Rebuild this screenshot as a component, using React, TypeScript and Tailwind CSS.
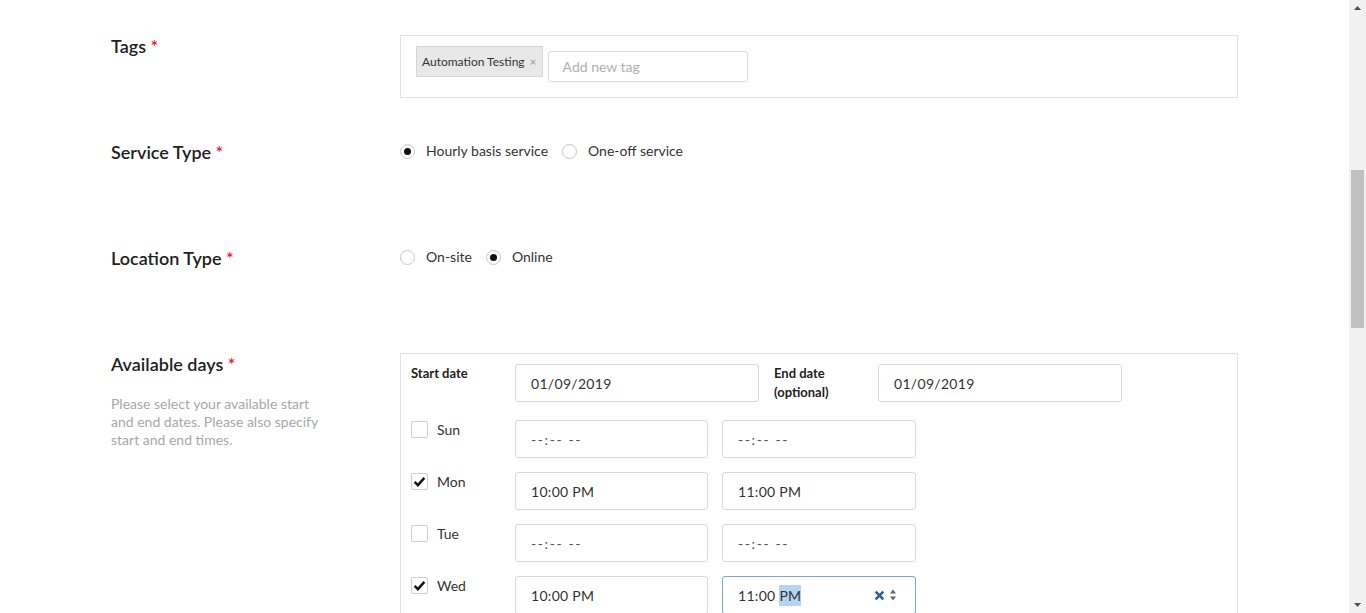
import React from "react";

const font = { fontFamily: "Lato, 'Open Sans', sans-serif" };

function Label({ text }: { text: string }) {
  return (
    <div className="w-[289px] shrink-0 text-[18px] leading-[22px] font-semibold text-[#222]">
      {text} <span className="text-[#e8202a]">*</span>
    </div>
  );
}

function Radio({ checked, label }: { checked?: boolean; label: string }) {
  return (
    <div className="flex items-center">
      <span className="w-[15px] h-[15px] rounded-full border border-[#c8c8c8] flex items-center justify-center bg-white">
        {checked && <span className="w-[7px] h-[7px] rounded-full bg-[#111]" />}
      </span>
      <span className="ml-[11px] text-[14px] leading-[15px] text-[#333] -translate-y-[1px]">{label}</span>
    </div>
  );
}

function Check({ checked, label }: { checked?: boolean; label: string }) {
  return (
    <div className="w-[104px] shrink-0 flex items-start pt-[1px]">
      <span className="w-[17px] h-[17px] rounded-[2px] border border-[#cfcfcf] flex items-center justify-center bg-white">
        {checked && (
          <svg width="13" height="13" viewBox="0 0 16 16">
            <path d="M2 8.5 L6 12.5 L14 3.5" fill="none" stroke="#111" strokeWidth="3" />
          </svg>
        )}
      </span>
      <span className="ml-[9px] text-[14px] leading-[17px] text-[#333]">{label}</span>
    </div>
  );
}

function Field({ value, w, placeholder }: { value: string; w: string; placeholder?: boolean }) {
  return (
    <div
      className={`${w} h-[38px] shrink-0 rounded-[3px] border border-[#dadada] bg-white flex items-center pl-[15px] text-[14px] ${
        placeholder ? "text-[#555] tracking-[1.6px]" : "text-[#333] tracking-[0.3px]"
      }`}
    >
      {value}
    </div>
  );
}

function DayRow({ day, checked, from, to, focused }: { day: string; checked?: boolean; from: string; to: string; focused?: boolean }) {
  const empty = from === "--:-- --";
  return (
    <div className="flex">
      <Check checked={checked} label={day} />
      <Field value={from} w="w-[193px]" placeholder={empty} />
      <div className="w-[14px]" />
      {focused ? (
        <div className="w-[194px] h-[38px] shrink-0 rounded-[3px] border border-[#7ea6c8] bg-white flex items-center pl-[15px] pr-[18px] text-[14px] tracking-[0.3px] text-[#333]">
          <span>11:00&nbsp;</span>
          <span className="bg-[#b5d3f3]">PM</span>
          <span className="flex-1" />
          <svg width="11" height="11" viewBox="0 0 10 10" className="mr-[4px]">
            <path d="M1.5 1.5 L8.5 8.5 M8.5 1.5 L1.5 8.5" stroke="#2b5c8c" strokeWidth="2.2" />
          </svg>
          <svg width="8" height="14" viewBox="0 0 8 14">
            <path d="M1 5.5 L4 1.5 L7 5.5 Z M1 8.5 L4 12.5 L7 8.5 Z" fill="#666" />
          </svg>
        </div>
      ) : (
        <Field value={to} w="w-[194px]" placeholder={to === "--:-- --"} />
      )}
    </div>
  );
}

export default function App() {
  return (
    <div className="flex w-full h-[613px] overflow-hidden bg-white" style={font}>
      <div className="flex-1 pl-[111px] pt-[35px]">
        <div className="flex min-h-[106px] items-start">
          <Label text="Tags" />
          <div className="w-[838px] h-[63px] border border-[#e3e3e3] flex items-start pl-[15px] pt-[10px]">
            <div className="h-[31px] px-[5px] flex items-center bg-[#e8e8e8] border border-[#d6d6d6] text-[12px] text-[#333]">
              Automation Testing
              <span className="ml-[5px] text-[#999] text-[12px]">×</span>
            </div>
            <div className="ml-[5px] mt-[5px] w-[200px] h-[31px] rounded-[3px] border border-[#dcdcdc] flex items-center pl-[14px] text-[14px] text-[#b0b0b0]">
              Add new tag
            </div>
          </div>
        </div>

        <div className="flex min-h-[106px] items-start">
          <Label text="Service Type" />
          <div className="flex items-center gap-[14px] h-[20px]">
            <Radio checked label="Hourly basis service" />
            <Radio label="One-off service" />
          </div>
        </div>

        <div className="flex min-h-[106px] items-start">
          <Label text="Location Type" />
          <div className="flex items-center gap-[14px] h-[20px]">
            <Radio label="On-site" />
            <Radio checked label="Online" />
          </div>
        </div>

        <div className="flex items-start">
          <div className="w-[289px] shrink-0">
            <div className="text-[18px] leading-[22px] font-semibold text-[#222]">
              Available days <span className="text-[#e8202a]">*</span>
            </div>
            <p className="mt-[20px] w-[210px] text-[14px] leading-[18px] text-[#a8a8a8]">
              Please select your available start and end dates. Please also specify start and end times.
            </p>
          </div>
          <div className="w-[838px] h-[300px] border border-[#e3e3e3] pl-[10px] pt-[10px] flex flex-col">
            <div className="flex">
              <div className="w-[104px] shrink-0 text-[13px] leading-[19px] font-bold text-[#222]">Start date</div>
              <Field value="01/09/2019" w="w-[244px]" />
              <div className="w-[15px]" />
              <div className="w-[104px] shrink-0 text-[13px] leading-[19px] font-bold text-[#222]">
                End date
                <br />
                (optional)
              </div>
              <Field value="01/09/2019" w="w-[244px]" />
            </div>
            <div className="mt-[18px] flex flex-col gap-[14px]">
              <DayRow day="Sun" from="--:-- --" to="--:-- --" />
              <DayRow day="Mon" checked from="10:00 PM" to="11:00 PM" />
              <DayRow day="Tue" from="--:-- --" to="--:-- --" />
              <DayRow day="Wed" checked from="10:00 PM" to="11:00 PM" focused />
            </div>
          </div>
        </div>
      </div>

      <div className="w-[17px] shrink-0 h-full bg-[#f1f1f1] flex flex-col items-center">
        <svg width="17" height="17" viewBox="0 0 17 17">
          <path d="M5 10 L8.5 6 L12 10 Z" fill="#505050" />
        </svg>
        <div className="h-[153px]" />
        <div className="w-[13px] h-[158px] bg-[#c1c1c1]" />
        <div className="flex-1" />
        <svg width="17" height="17" viewBox="0 0 17 17">
          <path d="M5 7 L8.5 11 L12 7 Z" fill="#505050" />
        </svg>
      </div>
    </div>
  );
}
